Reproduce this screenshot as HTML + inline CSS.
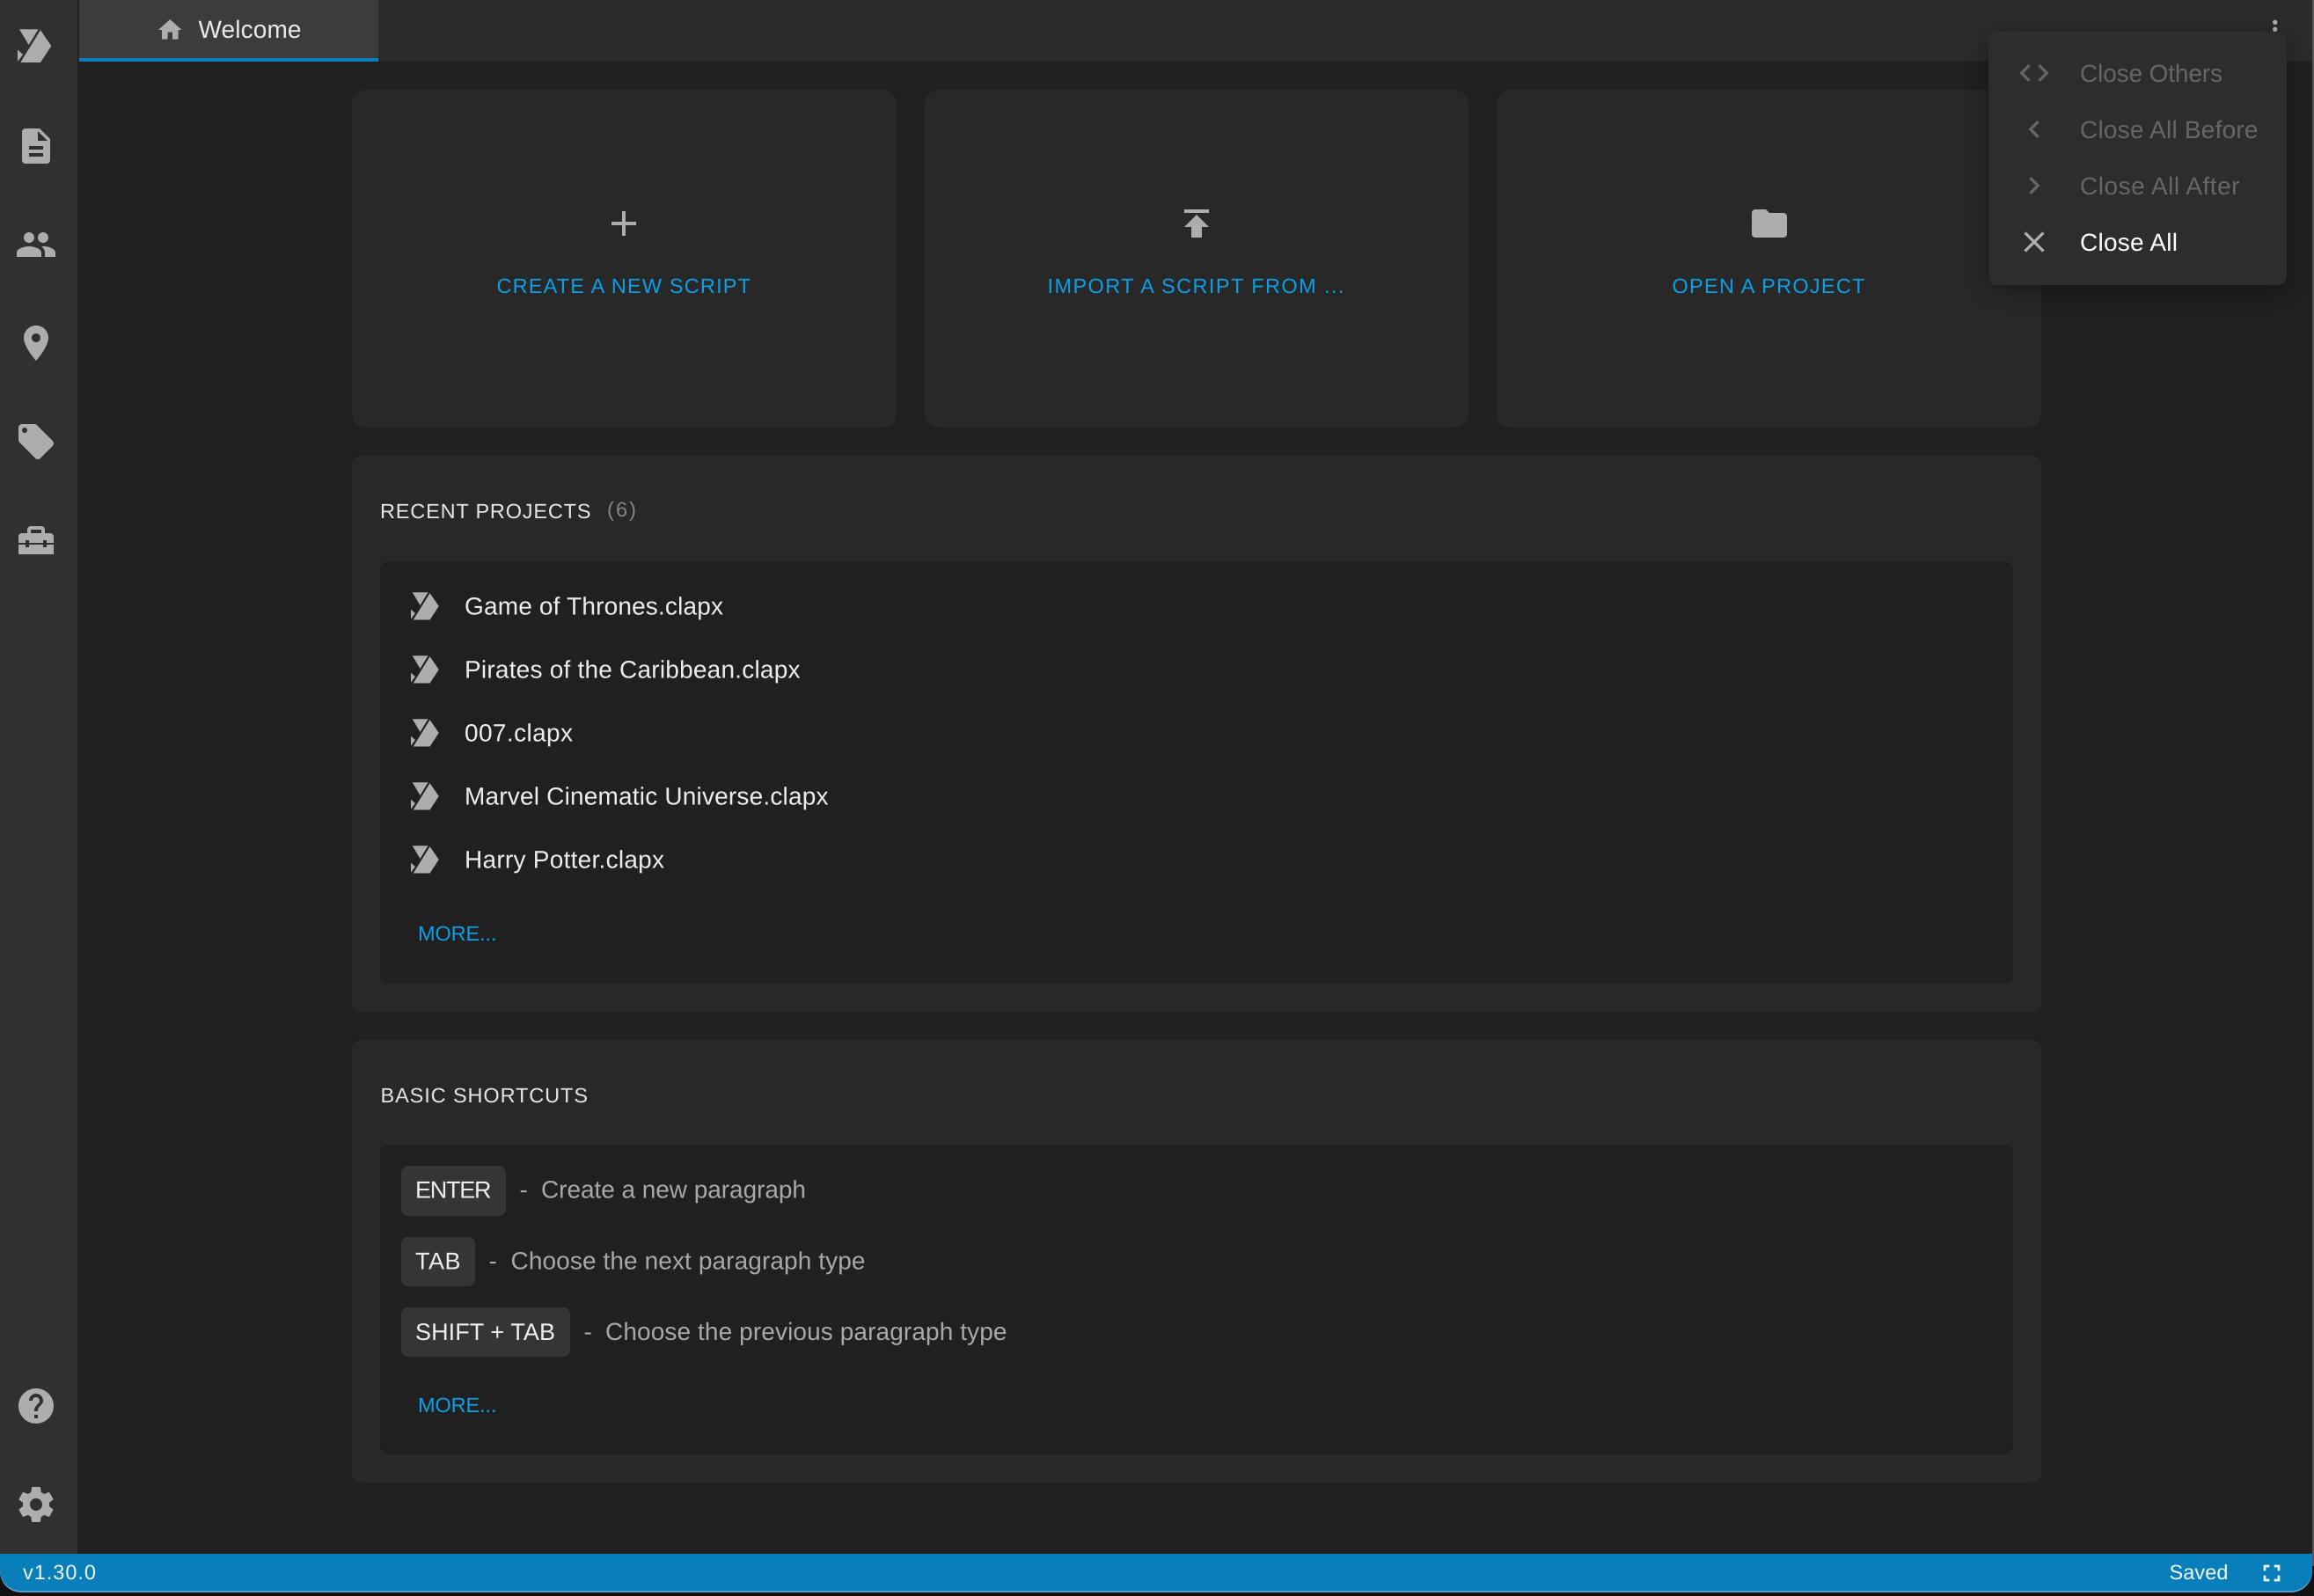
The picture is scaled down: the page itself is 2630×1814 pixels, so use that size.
<!DOCTYPE html>
<html lang="en">
<head>
<meta charset="utf-8">
<title>Welcome</title>
<style>
html,body{margin:0;padding:0;width:2630px;height:1814px;overflow:hidden;background:#111}
svg{display:block;position:absolute;left:0;top:0}
text{font-family:"Liberation Sans",sans-serif;text-rendering:geometricPrecision}
.s28{font-size:28px}
.s27{font-size:27px}
.s24{font-size:23.5px}
.blue{fill:#0a9fe6}
.head{fill:#e4e4e4}
.item{fill:#ececec}
.desc{fill:#a8a8a8}
.key{fill:#ececec}
.ic{fill:#adadad}
.dis{fill:#666}
</style>
</head>
<body>
<svg width="2630" height="1814" viewBox="0 0 2630 1814" xmlns="http://www.w3.org/2000/svg">
<defs>
<g id="logo">
<path d="M2 .3H23.5L12.7 18z"/>
<path d="M26 1.3L38.3 19.3 26 38H3.3z"/>
<path d="M0 23.5L6 29 0 37z"/>
</g>
</defs>

<!-- window background -->
<rect width="2630" height="1814" fill="#111"/>
<rect x="2628" y="0" width="2" height="1780" fill="#555"/>
<rect x="0" y="0" width="2628" height="1790" fill="#202020"/>

<!-- sidebar -->
<rect x="0" y="0" width="88" height="1770" fill="#303030"/>

<!-- tab bar -->
<rect x="90" y="0" width="2538" height="70" fill="#2b2b2b"/>
<rect x="88" y="0" width="2" height="70" fill="#232323"/>
<rect x="90" y="0" width="340" height="66" fill="#3c3c3c"/>
<rect x="90" y="66" width="340" height="4" fill="#0a7fbc"/>
<path class="ic" transform="translate(177.3 18) scale(1.3333)" d="M10 20v-6h4v6h5v-8h3L12 3 2 12h3v8z"/>
<text class="s28" x="225.5" y="43" fill="#e8e8e8" textLength="117">Welcome</text>

<!-- sidebar icons -->
<use href="#logo" class="ic" transform="translate(20 33)"/>
<path class="ic" transform="translate(17 142) scale(2)" d="M14 2H6c-1.1 0-2 .9-2 2v16c0 1.1.9 2 2 2h12c1.1 0 2-.9 2-2V8l-6-6zm2 16H8v-2h8v2zm0-4H8v-2h8v2zm-3-5V3.5L18.5 9H13z"/>
<path class="ic" transform="translate(17 254) scale(2)" d="M16 11c1.66 0 2.99-1.34 2.99-3S17.66 5 16 5c-1.66 0-3 1.34-3 3s1.34 3 3 3zm-8 0c1.66 0 2.99-1.34 2.99-3S9.66 5 8 5C6.34 5 5 6.34 5 8s1.34 3 3 3zm0 2c-2.33 0-7 1.17-7 3.5V19h14v-2.5c0-2.33-4.67-3.5-7-3.5zm8 0c-.29 0-.62.02-.97.05 1.16.84 1.97 1.97 1.97 3.45V19h6v-2.5c0-2.33-4.67-3.5-6-3.5z"/>
<path class="ic" transform="translate(17 366) scale(2)" d="M12 2C8.13 2 5 5.13 5 9c0 5.25 7 13 7 13s7-7.75 7-13c0-3.87-3.13-7-7-7zm0 9.5c-1.38 0-2.5-1.12-2.5-2.5s1.12-2.5 2.5-2.5 2.5 1.12 2.5 2.5-1.12 2.5-2.5 2.5z"/>
<path class="ic" transform="translate(17 478) scale(2)" d="M21.41 11.58l-9-9C12.05 2.22 11.55 2 11 2H4c-1.1 0-2 .9-2 2v7c0 .55.22 1.05.59 1.42l9 9c.36.36.86.58 1.41.58.55 0 1.05-.22 1.41-.59l7-7c.37-.36.59-.86.59-1.41 0-.55-.23-1.06-.59-1.42zM5.5 7C4.67 7 4 6.33 4 5.5S4.67 4 5.5 4 7 4.67 7 5.5 6.33 7 5.5 7z"/>
<path class="ic" fill-rule="evenodd" d="M31 606v-4a4 4 0 0 1 4-4h12a4 4 0 0 1 4 4v4h6a4 4 0 0 1 4 4v7H53v-3h-4v3H33v-3h-4v3H21v-7a4 4 0 0 1 4-4zM35 602v4h12v-4zM21 619h8v3h4v-3h16v3h4v-3h8v11H21z"/>
<path class="ic" transform="translate(17 1574) scale(2)" d="M12 2C6.48 2 2 6.48 2 12s4.48 10 10 10 10-4.48 10-10S17.52 2 12 2zm1 17h-2v-2h2v2zm2.07-7.75l-.9.92C13.45 12.9 13 13.5 13 15h-2v-.5c0-1.1.45-2.1 1.17-2.83l1.24-1.26c.37-.36.59-.86.59-1.41 0-1.1-.9-2-2-2s-2 .9-2 2H8c0-2.21 1.79-4 4-4s4 1.79 4 4c0 .88-.36 1.68-.93 2.25z"/>
<path class="ic" transform="translate(17 1686) scale(2)" d="M19.43 12.98c.04-.32.07-.64.07-.98s-.03-.66-.07-.98l2.11-1.65c.19-.15.24-.42.12-.64l-2-3.46c-.12-.22-.39-.3-.61-.22l-2.49 1c-.52-.4-1.08-.73-1.69-.98l-.38-2.65C14.46 2.18 14.25 2 14 2h-4c-.25 0-.46.18-.49.42l-.38 2.65c-.61.25-1.17.59-1.69.98l-2.49-1c-.23-.09-.49 0-.61.22l-2 3.46c-.13.22-.07.49.12.64l2.11 1.65c-.04.32-.07.65-.07.98s.03.66.07.98l-2.11 1.65c-.19.15-.24.42-.12.64l2 3.46c.12.22.39.3.61.22l2.49-1c.52.4 1.08.73 1.69.98l.38 2.65c.03.24.24.42.49.42h4c.25 0 .46-.18.49-.42l.38-2.65c.61-.25 1.17-.59 1.69-.98l2.49 1c.23.09.49 0 .61-.22l2-3.46c.12-.22.07-.49-.12-.64l-2.11-1.65zM12 15.5c-1.93 0-3.5-1.57-3.5-3.5s1.57-3.5 3.5-3.5 3.5 1.57 3.5 3.5-1.57 3.5-3.5 3.5z"/>

<!-- action cards -->
<rect x="400" y="102" width="619" height="384" rx="16" fill="#282828"/>
<rect x="1051" y="102" width="618" height="384" rx="16" fill="#282828"/>
<rect x="1701" y="102" width="619" height="384" rx="16" fill="#282828"/>
<path class="ic" transform="translate(685 230) scale(2)" d="M19 13h-6v6h-2v-6H5v-2h6V5h2v6h6v2z"/>
<path class="ic" transform="translate(1336 230) scale(2)" d="M5 4v2h14V4H5zm0 10h4v6h6v-6h4l-7-7-7 7z"/>
<path class="ic" transform="translate(1987 230) scale(2)" d="M10 4H4c-1.1 0-1.99.9-1.99 2L2 18c0 1.1.9 2 2 2h16c1.1 0 2-.9 2-2V8c0-1.1-.9-2-2-2h-8l-2-2z"/>
<text class="s24 blue" x="564.5" y="333" textLength="288.5">CREATE A NEW SCRIPT</text>
<text class="s24 blue" x="1190.5" y="333" textLength="337">IMPORT A SCRIPT FROM ...</text>
<text class="s24 blue" x="1900.5" y="333" textLength="219">OPEN A PROJECT</text>

<!-- recent projects -->
<rect x="400" y="518" width="1920" height="632" rx="10" fill="#282828"/>
<text class="s24 head" x="432" y="589" textLength="239.5">RECENT PROJECTS</text>
<text class="s24" x="690" y="587" fill="#858585" textLength="33">(6)</text>
<rect x="432" y="638" width="1856" height="480" rx="10" fill="#202020"/>
<use href="#logo" class="ic" transform="translate(467 673) scale(.83)"/>
<use href="#logo" class="ic" transform="translate(467 745) scale(.83)"/>
<use href="#logo" class="ic" transform="translate(467 817) scale(.83)"/>
<use href="#logo" class="ic" transform="translate(467 889) scale(.83)"/>
<use href="#logo" class="ic" transform="translate(467 961) scale(.83)"/>
<text class="s28 item" x="528" y="698.5" textLength="294">Game of Thrones.clapx</text>
<text class="s28 item" x="528" y="770.5" textLength="381.5">Pirates of the Caribbean.clapx</text>
<text class="s28 item" x="528" y="842.5" textLength="123">007.clapx</text>
<text class="s28 item" x="528" y="914.5" textLength="413.5">Marvel Cinematic Universe.clapx</text>
<text class="s28 item" x="528" y="986.5" textLength="227">Harry Potter.clapx</text>
<text class="s24 blue" x="475" y="1069" textLength="89.5">MORE...</text>

<!-- basic shortcuts -->
<rect x="400" y="1182" width="1920" height="503" rx="10" fill="#282828"/>
<text class="s24 head" x="432.5" y="1253" textLength="235.5">BASIC SHORTCUTS</text>
<rect x="432" y="1301" width="1856" height="352" rx="10" fill="#202020"/>
<rect x="456" y="1325" width="119" height="57" rx="8" fill="#353535"/>
<rect x="456" y="1406" width="84" height="56" rx="8" fill="#353535"/>
<rect x="456" y="1486" width="192" height="56" rx="8" fill="#353535"/>
<text class="s27 key" x="472" y="1361.5" textLength="86.5">ENTER</text>
<text class="s27 key" x="472" y="1442.5" textLength="51.5">TAB</text>
<text class="s27 key" x="472" y="1523" textLength="159">SHIFT + TAB</text>
<text class="s28 desc" x="590.5" y="1361.5">-</text>
<text class="s28 desc" x="615" y="1361.5" textLength="301">Create a new paragraph</text>
<text class="s28 desc" x="555.5" y="1442.5">-</text>
<text class="s28 desc" x="580.5" y="1442.5" textLength="403">Choose the next paragraph type</text>
<text class="s28 desc" x="663.5" y="1523">-</text>
<text class="s28 desc" x="688" y="1523" textLength="456.5">Choose the previous paragraph type</text>
<text class="s24 blue" x="475" y="1605" textLength="89.5">MORE...</text>

<!-- three dot menu trigger -->
<circle class="ic" cx="2585.7" cy="25.3" r="2.7"/>
<circle class="ic" cx="2585.7" cy="33.3" r="2.7"/>

<!-- dropdown -->
<rect x="2260" y="36" width="339" height="288" rx="10" fill="#2d2d2d" style="filter:drop-shadow(0 6px 12px rgba(0,0,0,.38))"/>
<path class="dis" transform="translate(2292 63) scale(1.6667)" d="M9.4 16.6L4.8 12l4.6-4.6L8 6l-6 6 6 6 1.4-1.4zm5.2 0l4.6-4.6-4.6-4.6L16 6l6 6-6 6-1.4-1.4z"/>
<path class="dis" transform="translate(2292 127) scale(1.6667)" d="M15.41 7.41L14 6l-6 6 6 6 1.41-1.41L10.83 12z"/>
<path class="dis" transform="translate(2292 191) scale(1.6667)" d="M10 6L8.59 7.41 13.17 12l-4.58 4.58L10 18l6-6z"/>
<path class="ic" transform="translate(2292 255) scale(1.6667)" d="M19 6.41L17.59 5 12 10.59 6.41 5 5 6.41 10.59 12 5 17.59 6.41 19 12 13.41 17.59 19 19 17.59 13.41 12z"/>
<text class="s28 dis" x="2364" y="93" textLength="162">Close Others</text>
<text class="s28 dis" x="2364" y="157" textLength="202.5">Close All Before</text>
<text class="s28 dis" x="2364" y="221" textLength="181.5">Close All After</text>
<text class="s28" x="2364" y="285" fill="#fff" textLength="111">Close All</text>

<!-- status bar -->
<path d="M0 1766H2628V1786a24 24 0 0 1-24 24H24a24 24 0 0 1-24-24z" fill="#5a9cc4"/>
<path d="M0 1766H2628V1784a24 24 0 0 1-24 24H24a24 24 0 0 1-24-24z" fill="#087fba"/>
<text class="s24" x="26" y="1795" fill="#eef7fc" textLength="83">v1.30.0</text>
<text class="s24" x="2465.5" y="1795" fill="#eef7fc" textLength="67">Saved</text>
<path fill="#eef7fc" transform="translate(2566 1772) scale(1.3333)" d="M7 14H5v5h5v-2H7v-3zm-2-4h2V7h3V5H5v5zm12 7h-3v2h5v-5h-2v3zM14 5v2h3v3h2V5h-5z"/>
</svg>
</body>
</html>
